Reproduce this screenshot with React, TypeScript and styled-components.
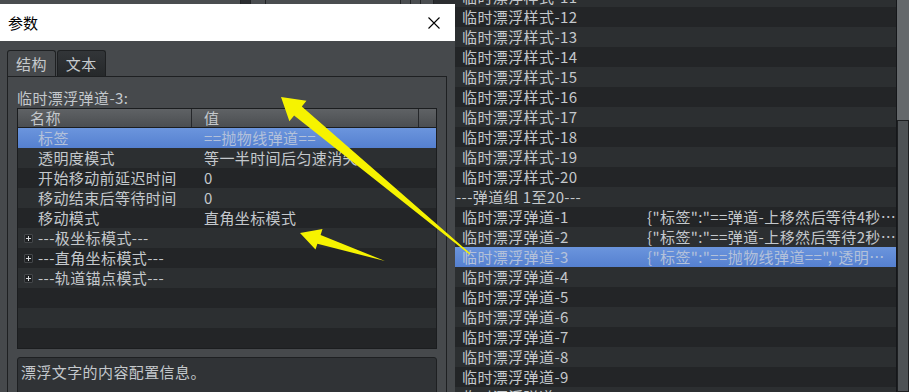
import React from "react";
import styled, { createGlobalStyle } from "styled-components";

const GlobalStyle = createGlobalStyle`
  html, body { margin: 0; padding: 0; background: #232527; }
  body { overflow: hidden; font-family: "Noto Sans CJK SC", "Noto Sans", sans-serif; }
  * { box-sizing: border-box; }
`;

const Screen = styled.div`
  position: relative;
  width: 909px;
  height: 392px;
  overflow: hidden;
  display: flex;
  font-family: "Noto Sans CJK SC", "Noto Sans", sans-serif;
  font-size: 15px;
  letter-spacing: 0.4px;
  color: #c4c8cc;
`;

/* ---------- main window underneath ---------- */
const Backdrop = styled.div`
  width: 455px;
  flex: none;
  display: flex;
  flex-direction: column;
  background: #3b3e41;
`;

const Toolbar = styled.div`
  height: 4px;
  display: flex;
  gap: 1px;
  background: #222426;
  overflow: hidden;
`;

const ToolSeg = styled.div<{ $w: number; $dark?: boolean }>`
  width: ${(p) => p.$w}px;
  flex: none;
  background: ${(p) => (p.$dark ? "#2b2d30" : "#4a4d50")};
`;

const ListPanel = styled.div`
  flex: 1;
  display: flex;
  background: #232527;
`;

const List = styled.div`
  flex: 1;
  overflow: hidden;
  border-right: 1px solid #15171a;
`;

const ListInner = styled.div`
  margin-top: -13px;
  display: flex;
  flex-direction: column;
`;

const ListRow = styled.div<{ $tone: "light" | "dark" | "sel" }>`
  height: 20px;
  flex: none;
  display: grid;
  grid-template-columns: 192px 1fr;
  align-items: center;
  white-space: nowrap;
  line-height: 20px;
  background: ${(p) =>
    p.$tone === "sel"
      ? "linear-gradient(to bottom, #6b95dd, #5580d0)"
      : p.$tone === "light"
      ? "#2c2f31"
      : "#232527"};
  color: ${(p) => (p.$tone === "sel" ? "#b3c1da" : "#c4c8cc")};
`;

const ListName = styled.span<{ $group?: boolean }>`
  padding-left: ${(p) => (p.$group ? 1 : 7)}px;
  overflow: visible;
`;

const ListValue = styled.span`
  overflow: hidden;
  padding-right: 2px;
`;

const Scrollbar = styled.div`
  width: 12px;
  flex: none;
  display: flex;
  flex-direction: column;
  padding-top: 120px;
  background: #64686b;
`;

const Thumb = styled.div`
  flex: 1;
  border: 1px solid #1d1f21;
  background: #4e5255;
`;

/* ---------- dialog ---------- */
const Dialog = styled.div`
  position: absolute;
  left: 0;
  top: 4px;
  width: 455px;
  height: 400px;
  display: flex;
  flex-direction: column;
`;

const TitleBar = styled.div`
  height: 37px;
  flex: none;
  background: #ffffff;
  display: flex;
  align-items: center;
  justify-content: space-between;
  padding: 0 15px 0 8px;
`;

const Title = styled.span`
  color: #000;
  font-size: 15px;
  letter-spacing: 0;
`;

const CloseIcon = styled.svg`
  width: 12px;
  height: 12px;
  display: block;
`;

const Body = styled.div`
  flex: 1;
  background: #46494c;
  padding: 9px 8px 0 7px;
  display: flex;
  flex-direction: column;
`;

const TabBar = styled.div`
  height: 26px;
  flex: none;
  display: flex;
  gap: 1px;
`;

const Tab = styled.div<{ $active?: boolean }>`
  height: 26px;
  padding: 0 8px;
  border: 1px solid #1e2022;
  border-bottom: none;
  border-radius: 3px 3px 0 0;
  line-height: 25px;
  color: #c6cacd;
  background: ${(p) =>
    p.$active ? "#46494c" : "linear-gradient(to bottom, #323538, #26292b)"};
`;

const Pane = styled.div`
  flex: 1;
  border: 1px solid #1e2022;
  border-bottom: none;
  background: #46494c;
  padding: 11px 8px 0 9px;
  display: flex;
  flex-direction: column;
`;

const PaneLabel = styled.div`
  height: 20px;
  line-height: 20px;
  color: #c4c8cc;
`;

const Table = styled.div`
  width: 420px;
  height: 241px;
  flex: none;
  border: 1px solid #1b1d1f;
  background: #232527;
  overflow: hidden;
  display: flex;
  flex-direction: column;
`;

const HeaderRow = styled.div`
  height: 19px;
  flex: none;
  display: grid;
  grid-template-columns: 174px 227px 1fr;
  border-bottom: 1px solid #1b1d1f;
  background: linear-gradient(to bottom, #5f6265, #4b4e51);
`;

const HeaderCell = styled.div<{ $last?: boolean }>`
  padding-left: 12px;
  line-height: 18px;
  color: #c4c8cc;
  border-right: ${(p) => (p.$last ? "none" : "1px solid #25272a")};
`;

const TreeRow = styled.div<{ $tone: "light" | "dark" | "sel" }>`
  height: 20px;
  flex: none;
  display: grid;
  grid-template-columns: 174px 1fr;
  align-items: center;
  line-height: 20px;
  white-space: nowrap;
  background: ${(p) =>
    p.$tone === "sel"
      ? "linear-gradient(to bottom, #6b95dd, #5580d0)"
      : p.$tone === "light"
      ? "#2c2f31"
      : "#232527"};
  color: ${(p) => (p.$tone === "sel" ? "#b3c1da" : "#c4c8cc")};
`;

const NameCell = styled.div`
  display: flex;
  align-items: center;
  gap: 5px;
  padding-left: 6px;
`;

const ExpanderSlot = styled.span`
  width: 9px;
  height: 9px;
  flex: none;
  display: block;
`;

const Expander = styled(ExpanderSlot)`
  position: relative;
  background: #1f2123;
  border: 1px solid #44474a;
  border-radius: 1px;
  &::before,
  &::after {
    content: "";
    position: absolute;
    background: #d6d8da;
  }
  &::before {
    left: 1px;
    top: 3px;
    width: 5px;
    height: 1px;
  }
  &::after {
    left: 3px;
    top: 1px;
    width: 1px;
    height: 5px;
  }
`;

const ValueCell = styled.div`
  padding-left: 12px;
  overflow: hidden;
`;

const Description = styled.div`
  margin-top: 8px;
  height: 60px;
  flex: none;
  width: 420px;
  border: 1px solid #1e2022;
  border-radius: 3px;
  background: #303336;
  padding: 4px 3px;
  line-height: 20px;
  color: #c4c8cc;
`;

const Annotations = styled.svg`
  position: absolute;
  left: 0;
  top: 0;
  width: 909px;
  height: 392px;
  pointer-events: none;
`;

type Tone = "light" | "dark" | "sel";

const treeRows: { name?: string; value?: string; expandable?: boolean; selected?: boolean }[] = [
  { name: "标签", value: "==抛物线弹道==", selected: true },
  { name: "透明度模式", value: "等一半时间后匀速消失" },
  { name: "开始移动前延迟时间", value: "0" },
  { name: "移动结束后等待时间", value: "0" },
  { name: "移动模式", value: "直角坐标模式" },
  { name: "---极坐标模式---", expandable: true },
  { name: "---直角坐标模式---", expandable: true },
  { name: "---轨道锚点模式---", expandable: true },
  {},
  {},
  {},
];

const listRows: { name: string; value?: string; group?: boolean }[] = [
  ...Array.from({ length: 10 }, (_, i) => ({ name: `临时漂浮样式-${i + 11}` })),
  { name: "---弹道组 1至20---", group: true },
  { name: "临时漂浮弹道-1", value: '{"标签":"==弹道-上移然后等待4秒…' },
  { name: "临时漂浮弹道-2", value: '{"标签":"==弹道-上移然后等待2秒…' },
  { name: "临时漂浮弹道-3", value: '{"标签":"==抛物线弹道==","透明…' },
  ...Array.from({ length: 7 }, (_, i) => ({ name: `临时漂浮弹道-${i + 4}` })),
];

const SELECTED_LIST = 13;

export default function App() {
  return (
    <>
      <GlobalStyle />
      <Screen>
        <Backdrop>
          <Toolbar>
            <ToolSeg $w={240} />
            <ToolSeg $w={9} $dark />
            <ToolSeg $w={14} />
            <ToolSeg $w={134} />
            <ToolSeg $w={9} />
            <ToolSeg $w={9} />
            <ToolSeg $w={12} />
            <ToolSeg $w={22} $dark />
          </Toolbar>
        </Backdrop>

        <ListPanel>
          <List>
            <ListInner>
              {listRows.map((r, i) => {
                const tone: Tone = i === SELECTED_LIST ? "sel" : i % 2 === 0 ? "light" : "dark";
                return (
                  <ListRow key={i} $tone={tone}>
                    <ListName $group={r.group}>{r.name}</ListName>
                    <ListValue>{r.value ?? ""}</ListValue>
                  </ListRow>
                );
              })}
            </ListInner>
          </List>
          <Scrollbar>
            <Thumb />
          </Scrollbar>
        </ListPanel>

        <Dialog>
          <TitleBar>
            <Title>参数</Title>
            <CloseIcon viewBox="0 0 12 12">
              <path d="M0.5 0.5 L11.5 11.5 M11.5 0.5 L0.5 11.5" stroke="#000" strokeWidth="1.1" fill="none" />
            </CloseIcon>
          </TitleBar>
          <Body>
            <TabBar>
              <Tab $active>结构</Tab>
              <Tab>文本</Tab>
            </TabBar>
            <Pane>
              <PaneLabel>临时漂浮弹道-3:</PaneLabel>
              <Table>
                <HeaderRow>
                  <HeaderCell>名称</HeaderCell>
                  <HeaderCell>值</HeaderCell>
                  <HeaderCell $last />
                </HeaderRow>
                {treeRows.map((r, i) => {
                  const tone: Tone = r.selected ? "sel" : i % 2 === 1 ? "light" : "dark";
                  return (
                    <TreeRow key={i} $tone={tone}>
                      <NameCell>
                        {r.expandable ? <Expander /> : <ExpanderSlot />}
                        <span>{r.name ?? ""}</span>
                      </NameCell>
                      <ValueCell>{r.value ?? ""}</ValueCell>
                    </TreeRow>
                  );
                })}
              </Table>
              <Description>漂浮文字的内容配置信息。</Description>
            </Pane>
          </Body>
        </Dialog>

        <Annotations viewBox="0 0 909 392">
          <polygon
            points="281,97 306.5,100.8 301.8,106.6 470.4,253.6 469.6,254.4 294.1,115.6 289.4,121.3"
            fill="#f6f300"
          />
          <polygon
            points="300,233 322.5,229 320.6,235 385,261 317.4,243.8 315.5,249.6"
            fill="#f6f300"
          />
        </Annotations>
      </Screen>
    </>
  );
}
